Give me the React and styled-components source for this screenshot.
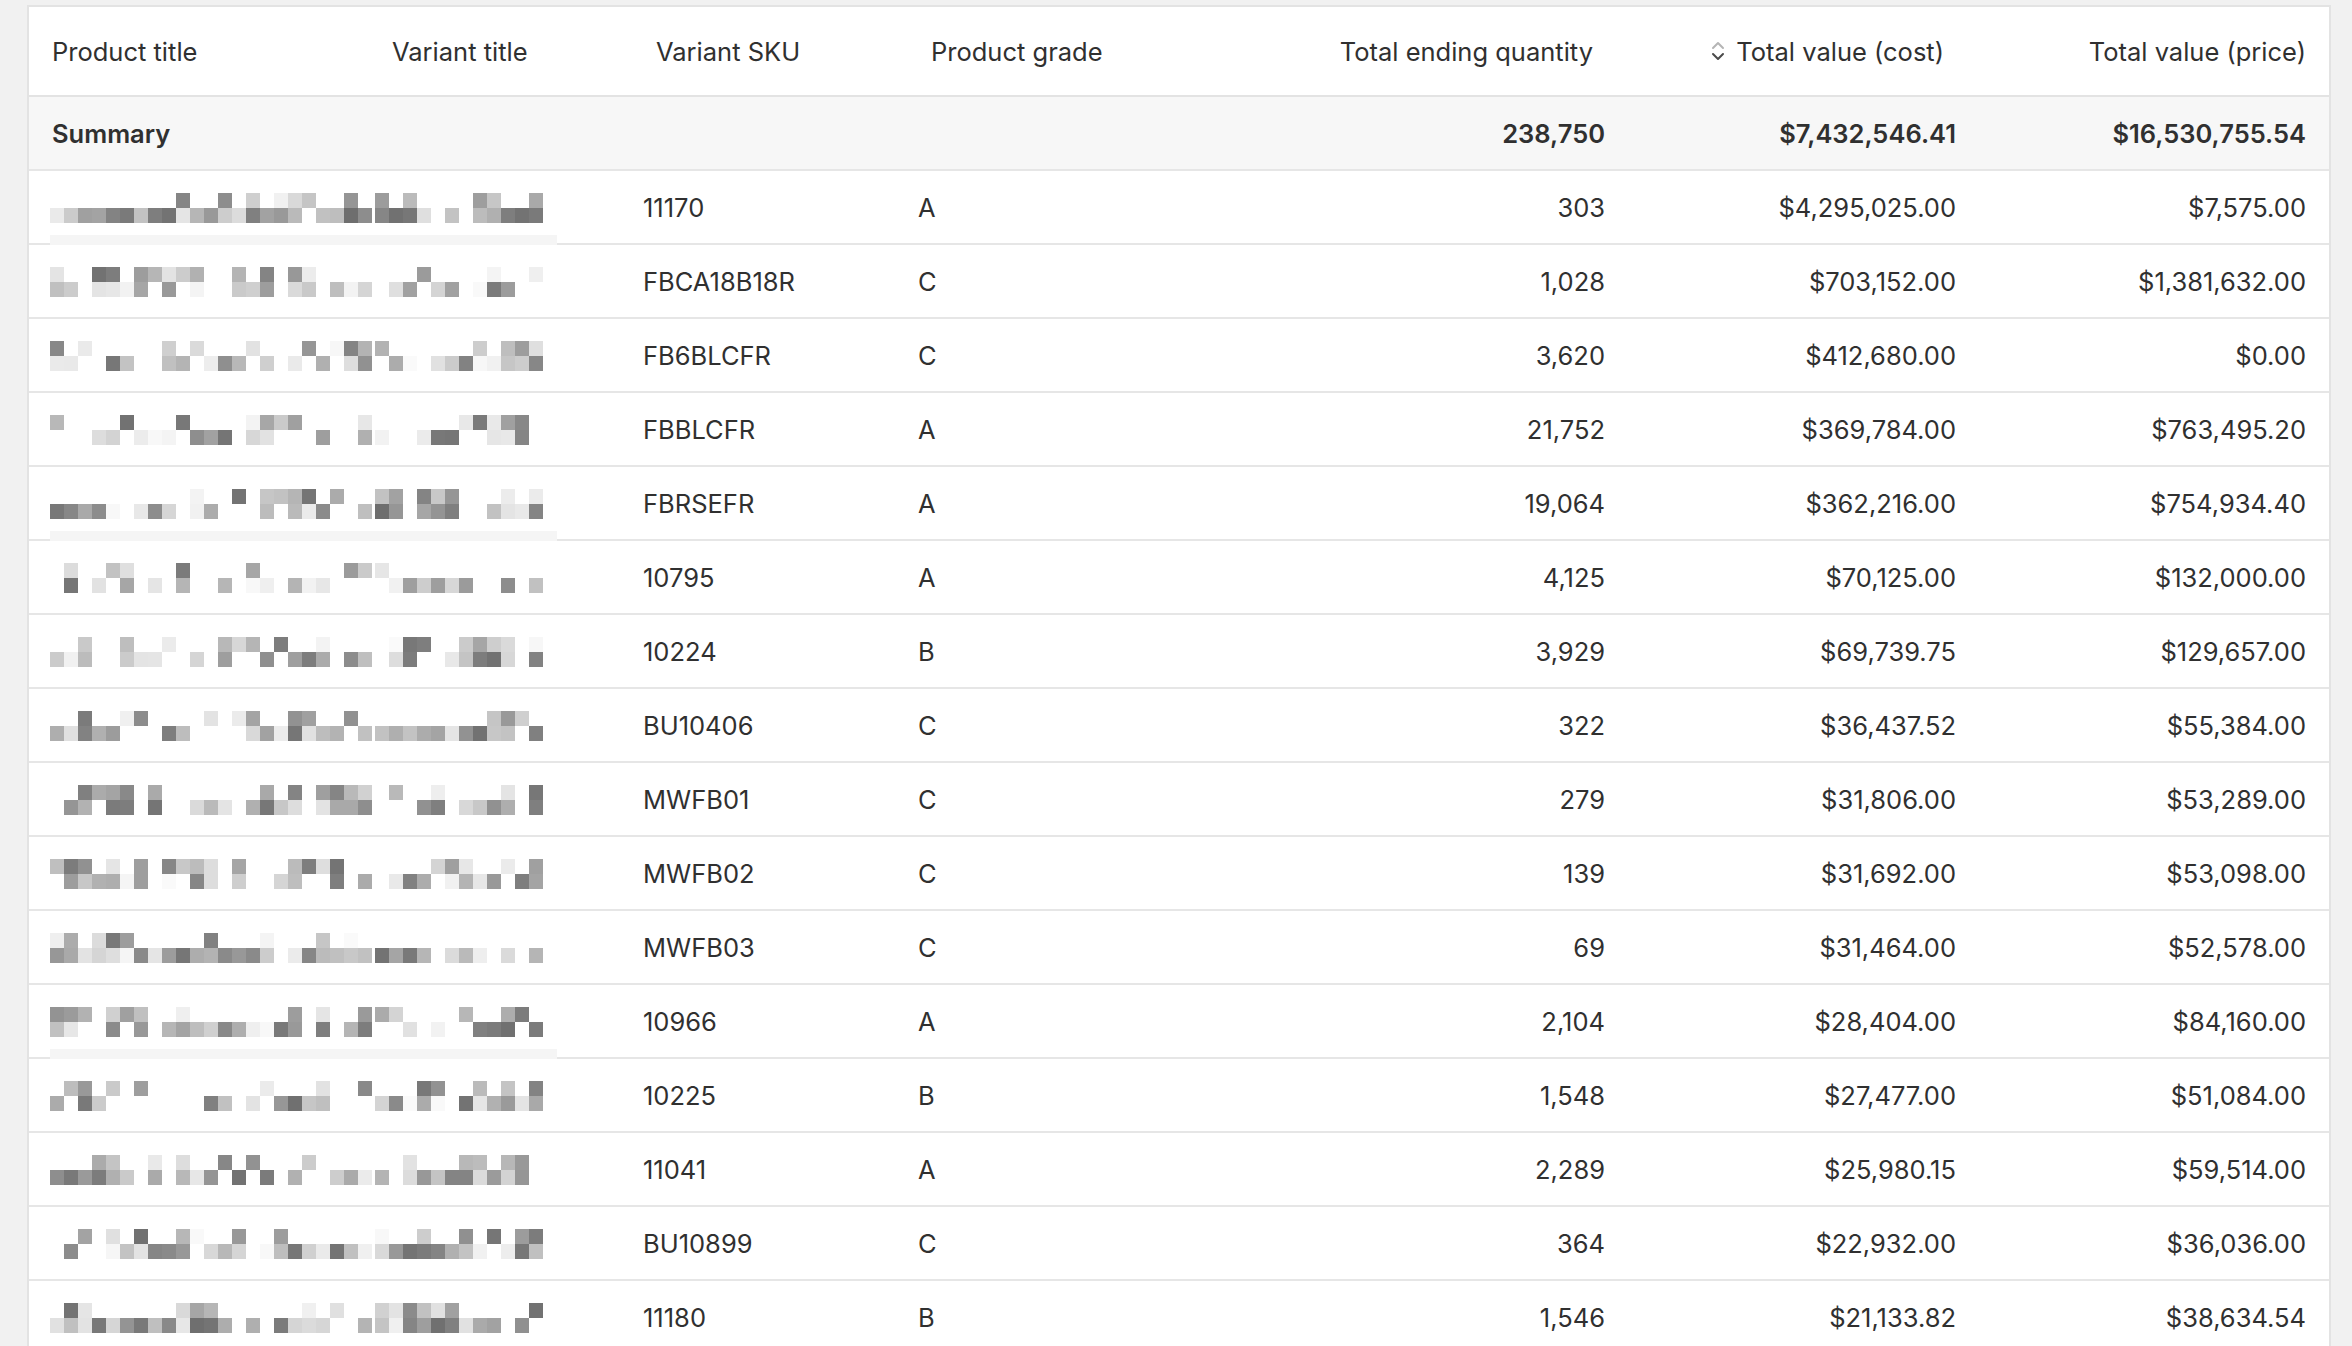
import React from "react";
import styled, { createGlobalStyle } from "styled-components";

const Global = createGlobalStyle`
  body { margin: 0; background: #f1f1f1; font-family: Inter, "Noto Sans", sans-serif; color: #303030; }
`;

const Page = styled.div`
  padding: 5px 25px 0 27px;
  height: 1346px;
  overflow: hidden;
  box-sizing: border-box;
`;

const Table = styled.div`
  background: #fff;
  border-top: 2px solid #e3e3e3;
  border-left: 2px solid #e3e3e3;
  border-right: 2px solid #e3e3e3;
  width: 2300px;
`;

const cols = "340px 264px 275px 369px 351px 351px 1fr";

const HeadRow = styled.div`
  display: grid;
  grid-template-columns: ${cols};
  height: 88px;
  align-items: center;
  border-bottom: 2px solid #e3e3e3;
  font-size: 25.5px;
  color: #303030;
`;

const Row = styled.div`
  display: grid;
  grid-template-columns: ${cols};
  height: 72px;
  align-items: center;
  border-bottom: 2px solid #e6e6e6;
  font-size: 25.5px;
  background: ${(p) => (p.$summary ? "#f7f7f7" : "#fff")};
  font-weight: ${(p) => (p.$summary ? 600 : 400)};
  position: relative;
`;

const HCell = styled.div`
  padding: 0 ${(p) => (p.$right ? (p.$pr || 23) + "px" : "0")} 0 ${(p) => (p.$right ? "0" : (p.$pl || 23) + "px")};
  white-space: nowrap;
  display: flex;
  align-items: center;
  justify-content: ${(p) => (p.$right ? "flex-end" : "flex-start")};
  gap: 10px;
`;

const Cell = styled.div`
  padding: ${(p) => (p.$right ? "0 23px 0 0" : `0 0 0 ${p.$pl ?? 10}px`)};
  text-align: ${(p) => (p.$right ? "right" : "left")};
  white-space: nowrap;
`;

const MosaicCell = styled.div`
  grid-column: 1 / span 2;
  position: relative;
  height: 100%;
`;

function rng(seed) {
  let s = seed * 9301 + 49297;
  return () => {
    s = (s * 9301 + 49297) % 233280;
    return s / 233280;
  };
}

function Mosaic({ seed, bar }) {
  const r = rng(seed + 7);
  const rects = [];
  const bs = 14;
  const ranges = [[21, 330], [346, 506]];
  ranges.forEach(([a, b]) => {
    for (let x = a; x < b; x += bs) {
      for (let row = 0; row < 2; row++) {
        const v = r();
        if (v < (row === 0 ? 0.6 : 0.3)) continue;
        const g = Math.round(110 + r() * 140);
        rects.push(
          <rect key={x + "-" + row} x={x} y={22 + row * 15} width={bs} height={15} fill={`rgb(${g},${g},${g})`} />
        );
      }
    }
  });
  return (
    <svg width="560" height="80" style={{ position: "absolute", left: 0, top: 0, overflow: "visible" }}>
      {rects}
      {bar && <rect x="21" y="64" width="507" height="12" fill="#f5f5f5" />}
    </svg>
  );
}

const SortIcon = () => (
  <svg width="16" height="22" viewBox="0 0 16 22">
    <path d="M3 8 L8 3 L13 8" stroke="#b5b5b5" strokeWidth="2" fill="none" strokeLinecap="round" strokeLinejoin="round" />
    <path d="M3 14 L8 19 L13 14" stroke="#4a4a4a" strokeWidth="2" fill="none" strokeLinecap="round" strokeLinejoin="round" />
  </svg>
);

const data = [
  ["11170", "A", "303", "$4,295,025.00", "$7,575.00"],
  ["FBCA18B18R", "C", "1,028", "$703,152.00", "$1,381,632.00"],
  ["FB6BLCFR", "C", "3,620", "$412,680.00", "$0.00"],
  ["FBBLCFR", "A", "21,752", "$369,784.00", "$763,495.20"],
  ["FBRSEFR", "A", "19,064", "$362,216.00", "$754,934.40"],
  ["10795", "A", "4,125", "$70,125.00", "$132,000.00"],
  ["10224", "B", "3,929", "$69,739.75", "$129,657.00"],
  ["BU10406", "C", "322", "$36,437.52", "$55,384.00"],
  ["MWFB01", "C", "279", "$31,806.00", "$53,289.00"],
  ["MWFB02", "C", "139", "$31,692.00", "$53,098.00"],
  ["MWFB03", "C", "69", "$31,464.00", "$52,578.00"],
  ["10966", "A", "2,104", "$28,404.00", "$84,160.00"],
  ["10225", "B", "1,548", "$27,477.00", "$51,084.00"],
  ["11041", "A", "2,289", "$25,980.15", "$59,514.00"],
  ["BU10899", "C", "364", "$22,932.00", "$36,036.00"],
  ["11180", "B", "1,546", "$21,133.82", "$38,634.54"],
];

export default function App() {
  return (
    <>
      <Global />
      <Page>
        <Table>
          <HeadRow>
            <HCell>Product title</HCell>
            <HCell>Variant title</HCell>
            <HCell>Variant SKU</HCell>
            <HCell>Product grade</HCell>
            <HCell $right $pr={35}>Total ending quantity</HCell>
            <HCell $right $pr={35}><SortIcon />Total value (cost)</HCell>
            <HCell $right>Total value (price)</HCell>
          </HeadRow>
          <Row $summary>
            <Cell $pl={23}>Summary</Cell>
            <Cell />
            <Cell />
            <Cell />
            <Cell $right>238,750</Cell>
            <Cell $right>$7,432,546.41</Cell>
            <Cell $right>$16,530,755.54</Cell>
          </Row>
          {data.map((d, i) => (
            <Row key={i}>
              <MosaicCell>
                <Mosaic seed={i * 13 + 3} bar={i === 0 || i === 4 || i === 11} />
              </MosaicCell>
              <Cell>{d[0]}</Cell>
              <Cell>{d[1]}</Cell>
              <Cell $right>{d[2]}</Cell>
              <Cell $right>{d[3]}</Cell>
              <Cell $right>{d[4]}</Cell>
            </Row>
          ))}
        </Table>
      </Page>
    </>
  );
}
